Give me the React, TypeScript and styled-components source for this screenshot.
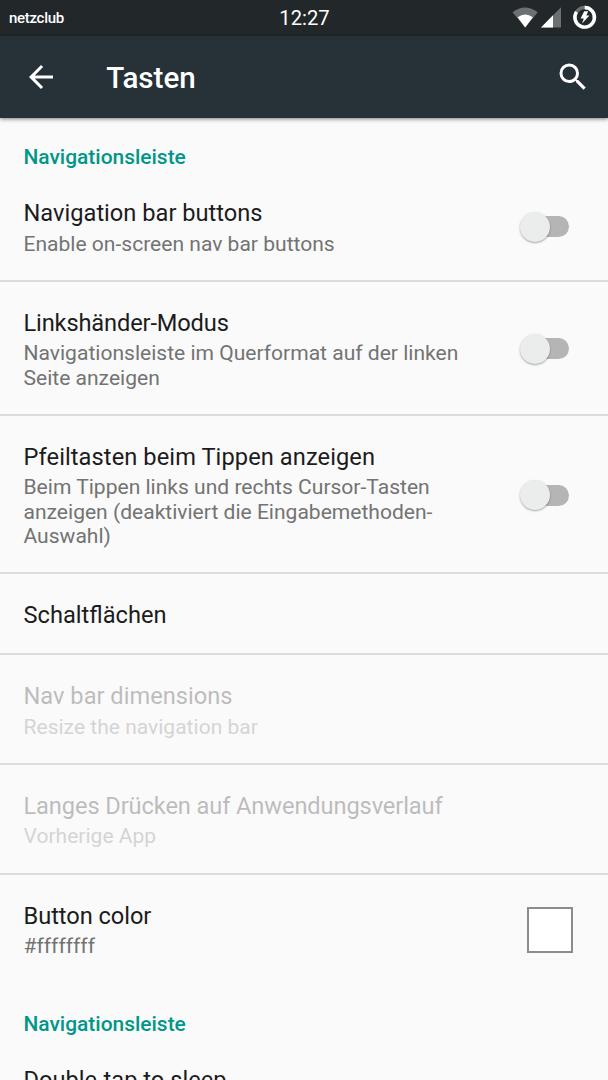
import React from 'react';
import styled, { createGlobalStyle } from 'styled-components';

const GlobalStyle = createGlobalStyle`
  * { box-sizing: border-box; }
  html, body { margin: 0; height: 1080px; overflow: hidden; background: #fafafa; }
  body { font-family: Roboto, "Noto Sans", sans-serif; }
`;

const Screen = styled.div`
  height: 1080px;
  overflow: hidden;
  background: #fafafa;
`;

const StatusBar = styled.div`
  display: grid;
  grid-template-columns: 1fr auto 1fr;
  align-items: center;
  height: 36px;
  padding: 0 8px 0 9px;
  background: #22272a;
  color: #fff;
`;

const Carrier = styled.span`
  font-size: 15px;
  font-weight: 500;
  line-height: 18px;
  letter-spacing: -0.3px;
`;

const Clock = styled.span`
  font-size: 20.2px;
  line-height: 24px;
`;

const StatusIcons = styled.div`
  display: flex;
  justify-content: flex-end;
  height: 36px;
`;

const Toolbar = styled.header`
  display: flex;
  align-items: center;
  height: 82px;
  padding: 0 17.5px 0 23.3px;
  background: #273238;
  color: #fff;
  box-shadow: 0 1px 4px rgba(0, 0, 0, 0.5);
`;

const Heading = styled.h1`
  flex: 1;
  margin: 1px 0 0 47px;
  font-size: 29.6px;
  line-height: 36px;
  font-weight: 500;
`;

const SectionTitle = styled.h2`
  margin: 0;
  height: 54.2px;
  padding: 27.2px 23.5px 0;
  font-size: 20.95px;
  line-height: 25px;
  font-weight: 500;
  color: #009688;
`;

const Row = styled.div<{ $divider?: boolean }>`
  display: flex;
  align-items: center;
  justify-content: space-between;
  padding: 24px 35px 22.1px 23.5px;
  border-bottom: 2px solid ${p => (p.$divider === false ? 'transparent' : '#dcdcdc')};
`;

const Labels = styled.div<{ $disabled?: boolean }>`
  width: 450px;
  opacity: ${p => (p.$disabled ? 0.28 : 1)};
`;

const Title = styled.div<{ $tracking?: number }>`
  padding-top: 3px;
  font-size: 23.65px;
  line-height: 29.8px;
  letter-spacing: ${p => (p.$tracking ? `${p.$tracking}px` : 'normal')};
  color: #1c1c1c;
`;

const Summary = styled.div`
  margin: 2.6px 0 1.8px;
  font-size: 21.05px;
  line-height: 24.4px;
  font-variant-ligatures: none;
  color: #737373;
`;

const Track = styled.div`
  display: flex;
  align-items: center;
  width: 45px;
  height: 21px;
  margin-right: 4.5px;
  border-radius: 11px;
  background: #b5b5b5;
`;

const Thumb = styled.div`
  width: 30px;
  height: 30px;
  margin-left: -4px;
  border-radius: 50%;
  background: #ebeded;
  box-shadow: 0 1px 2px rgba(0, 0, 0, 0.35);
`;

const Swatch = styled.div`
  width: 46px;
  height: 46px;
  border: 2px solid #8c8c8c;
  background: #fff;
`;

const Switch = () => (
  <Track role="switch" aria-checked="false">
    <Thumb />
  </Track>
);

type Item = {
  title: string;
  summary?: string;
  control?: 'switch' | 'color';
  disabled?: boolean;
  divider?: boolean;
  tracking?: number;
};

const items: Item[] = [
  { title: 'Navigation bar buttons', summary: 'Enable on-screen nav bar buttons', control: 'switch' },
  {
    title: 'Linkshänder-Modus',
    summary: 'Navigationsleiste im Querformat auf der linken Seite anzeigen',
    control: 'switch',
    tracking: -0.15,
  },
  {
    title: 'Pfeiltasten beim Tippen anzeigen',
    summary: 'Beim Tippen links und rechts Cursor-Tasten anzeigen (deaktiviert die Eingabemethoden-Auswahl)',
    control: 'switch',
    tracking: 0.08,
  },
  { title: 'Schaltflächen' },
  { title: 'Nav bar dimensions', summary: 'Resize the navigation bar', disabled: true },
  { title: 'Langes Drücken auf Anwendungsverlauf', summary: 'Vorherige App', disabled: true, tracking: -0.11 },
  { title: 'Button color', summary: '#ffffffff', control: 'color', divider: false, tracking: -0.06 },
];

const Preference = ({ title, summary, control, disabled, divider, tracking }: Item) => (
  <Row $divider={divider}>
    <Labels $disabled={disabled}>
      <Title $tracking={tracking}>{title}</Title>
      {summary && <Summary>{summary}</Summary>}
    </Labels>
    {control === 'switch' && <Switch />}
    {control === 'color' && <Swatch />}
  </Row>
);

export default function App() {
  return (
    <>
      <GlobalStyle />
      <Screen>
        <StatusBar>
          <Carrier>netzclub</Carrier>
          <Clock>12:27</Clock>
          <StatusIcons>
            <svg width="91" height="36" viewBox="509 0 91 36">
              <path d="M512.5 12.3Q525 2.8 537.8 12.3L525.2 27.5Z" fill="#6d7072" />
              <path d="M517.6 17.2Q525.2 12 532.8 17.2L525.2 27.5Z" fill="#fff" />
              <path d="M561 7.2V27.5H541Z" fill="#6d7072" />
              <path d="M553 15.3V27.5H541Z" fill="#fff" />
              <circle cx="584.7" cy="17.3" r="9.8" fill="none" stroke="#6d7072" strokeWidth="3.4" />
              <path d="M584.7 7.5A9.8 9.8 0 1 1 576.5 11.9" fill="none" stroke="#fff" strokeWidth="3.4" />
              <path d="M584.2 11.2H588.2L586.3 15.4H589.5L582 23.6L583.8 18.5H580.6Z" fill="#fff" />
            </svg>
          </StatusIcons>
        </StatusBar>
        <Toolbar>
          <svg width="36" height="36" viewBox="0 0 24 24" fill="#fff" aria-label="Zurück">
            <path d="M20 11H7.83l5.59-5.59L12 4l-8 8 8 8 1.41-1.41L7.83 13H20v-2z" />
          </svg>
          <Heading>Tasten</Heading>
          <svg width="36" height="36" viewBox="0 0 24 24" fill="#fff" aria-label="Suchen">
            <path d="M15.5 14h-.79l-.28-.27A6.47 6.47 0 0 0 16 9.5 6.5 6.5 0 1 0 9.5 16c1.61 0 3.09-.59 4.23-1.57l.27.28v.79l5 4.99L20.49 19l-4.99-5zm-6 0C7.01 14 5 11.99 5 9.5S7.01 5 9.5 5 14 7.01 14 9.5 11.99 14 9.5 14z" />
          </svg>
        </Toolbar>
        <SectionTitle>Navigationsleiste</SectionTitle>
        {items.map(item => (
          <Preference key={item.title} {...item} />
        ))}
        <SectionTitle>Navigationsleiste</SectionTitle>
        <Preference title="Double-tap to sleep" />
      </Screen>
    </>
  );
}
